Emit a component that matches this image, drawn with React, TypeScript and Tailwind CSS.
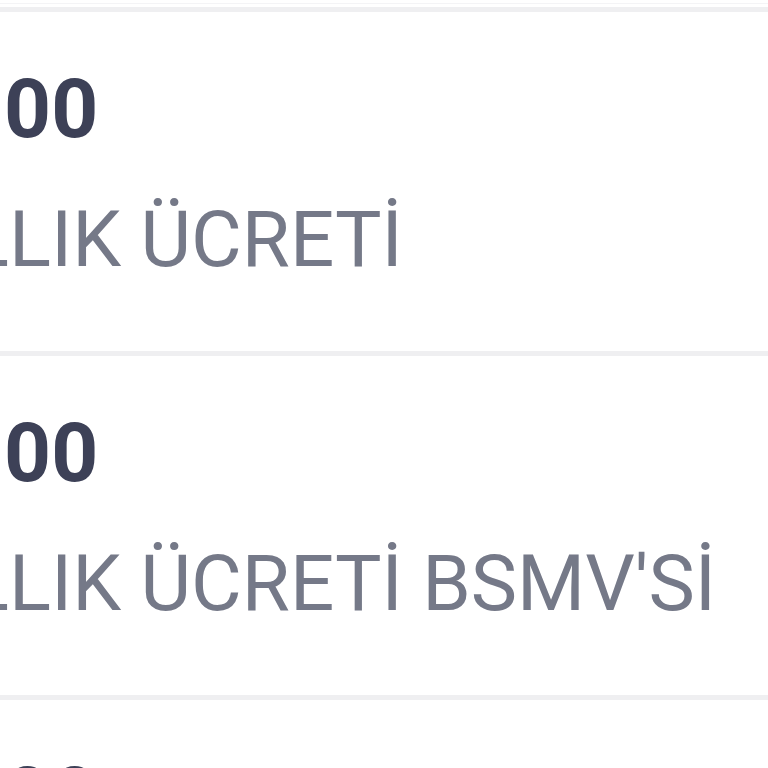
const items = [
  { amount: ':00', label: 'LLIK ÜCRETİ' },
  { amount: ':00', label: "LLIK ÜCRETİ BSMV'Sİ" },
  { amount: ':00', label: 'LLIK ÜCRETİ' },
];

export default function App() {
  return (
    <div className="min-h-screen bg-white overflow-hidden font-['Roboto',sans-serif]">
      {/* top edge of previous row */}
      <div className="pt-[3px]">
        <div className="h-px bg-[#f4f4f6]" />
        <div className="h-[3px]" />
      </div>

      {items.map((item, index) => (
        <div key={index}>
          <div className="h-[5px] bg-[#efeff1]" />
          <div className="bg-white pt-[56px] pb-[72px] overflow-hidden">
            <div className="-ml-[19px] whitespace-nowrap text-[82px] leading-none font-bold text-[#3d4157]">
              {item.amount}
            </div>
            <div className="mt-[51px] -ml-[33px] whitespace-nowrap text-[78px] leading-none text-[#757988]">
              {item.label}
            </div>
          </div>
        </div>
      ))}
    </div>
  );
}
